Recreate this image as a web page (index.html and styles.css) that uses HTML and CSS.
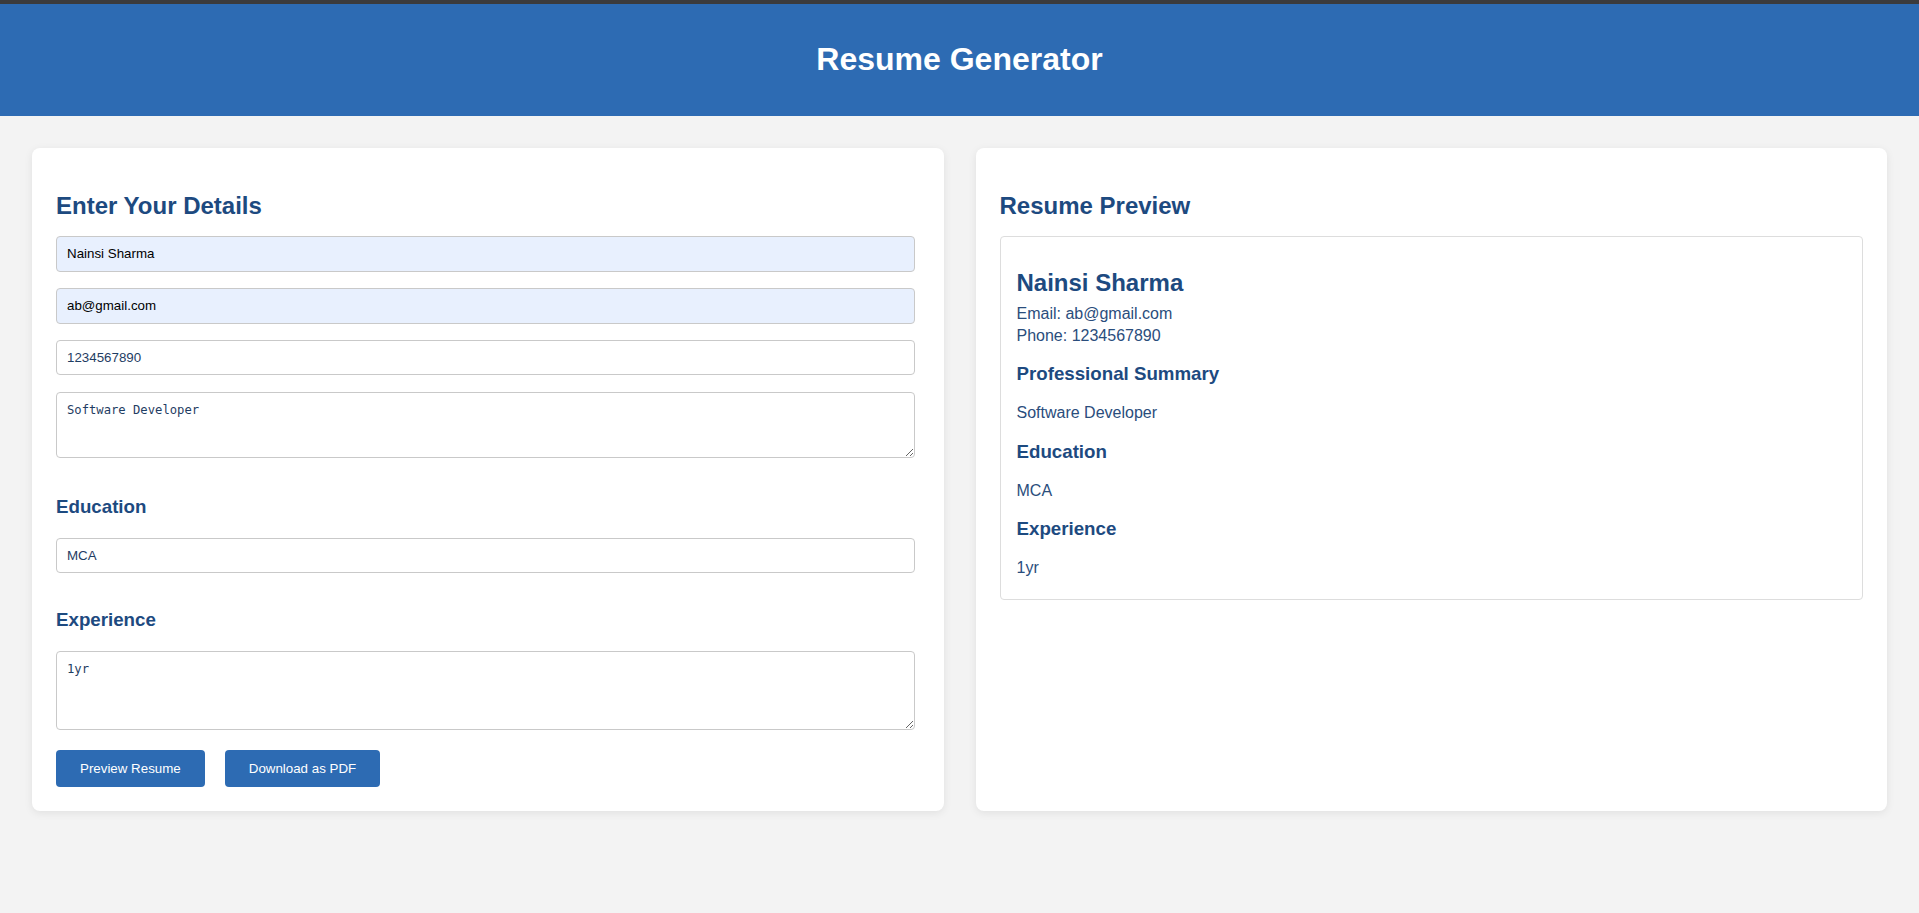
FILE: index.html
```html
<!DOCTYPE html>
<html lang="en">
<head>
<meta charset="UTF-8">
<title>Resume Generator</title>
<link rel="stylesheet" href="styles.css">
</head>
<body>
<header class="site-header">
  <h1 class="site-title">Resume Generator</h1>
</header>
<main class="layout">
  <section class="card form-card">
    <h2 class="card-title">Enter Your Details</h2>
    <input class="field autofilled" type="text" value="Nainsi Sharma">
    <input class="field autofilled" type="email" value="ab@gmail.com">
    <input class="field" type="text" value="1234567890">
    <textarea class="field area area-summary">Software Developer</textarea>
    <h3 class="section-title">Education</h3>
    <input class="field" type="text" value="MCA">
    <h3 class="section-title">Experience</h3>
    <textarea class="field area area-exp">1yr</textarea>
    <div class="actions">
      <button class="btn" type="button">Preview Resume</button>
      <button class="btn" type="button">Download as PDF</button>
    </div>
  </section>
  <section class="card preview-card">
    <h2 class="card-title">Resume Preview</h2>
    <div class="preview">
      <h2 class="preview-name">Nainsi Sharma</h2>
      <p class="preview-text">Email: ab@gmail.com</p>
      <p class="preview-text">Phone: 1234567890</p>
      <h3 class="preview-heading">Professional Summary</h3>
      <p class="preview-text">Software Developer</p>
      <h3 class="preview-heading">Education</h3>
      <p class="preview-text">MCA</p>
      <h3 class="preview-heading">Experience</h3>
      <p class="preview-text">1yr</p>
    </div>
  </section>
</main>
</body>
</html>
```
FILE: styles.css
```css
html, body {
  margin: 0;
  padding: 0;
}

body {
  background: #f3f3f3;
  font-family: "Liberation Sans", Arial, sans-serif;
  color: #2a4a72;
  min-height: 913px;
}

.site-header {
  background: #2d6bb3;
  border-top: 4px solid #3b3b3d;
  padding: 16px;
  text-align: center;
}

.site-title {
  margin: 21.44px 0;
  font-size: 32px;
  font-weight: bold;
  color: #ffffff;
  line-height: normal;
}

.layout {
  display: grid;
  grid-template-columns: 1fr 1fr;
  gap: 32px;
  padding: 32px;
  align-items: stretch;
}

.card {
  background: #ffffff;
  border-radius: 8px;
  box-shadow: 0 2px 8px rgba(0, 0, 0, 0.08);
  padding: 24px;
  display: flex;
  flex-direction: column;
}

.card-title {
  font-size: 24px;
  font-weight: bold;
  color: #1d4a80;
  margin: 20px 0 16.4px;
  line-height: normal;
}

.field {
  box-sizing: border-box;
  height: 35.33px;
  margin: 0 5px 16.6px 0;
  padding: 9px 10px;
  border: 1px solid #c9c9c9;
  border-radius: 4px;
  background: #ffffff;
  font-family: "Liberation Sans", Arial, sans-serif;
  font-size: 13.333px;
  color: #1f3d63;
  outline: none;
}

.autofilled {
  background: #e8f0fe;
  color: #000000;
}

.area {
  font-family: "DejaVu Sans Mono", "Liberation Mono", monospace;
  font-size: 12.2px;
  padding: 10px;
  resize: vertical;
  margin-bottom: 18.8px;
}

.area-summary {
  height: 66.4px;
}

.area-exp {
  height: 79.8px;
  margin-bottom: 20px;
}

.section-title {
  font-size: 18.72px;
  font-weight: bold;
  color: #1d4a80;
  margin: 18.72px 0 20px;
  line-height: normal;
}

.actions {
  display: flex;
  gap: 20px;
}

.btn {
  background: #2d6bb3;
  color: #ffffff;
  border: none;
  border-radius: 4px;
  padding: 10.7px 24px;
  font-family: "Liberation Sans", Arial, sans-serif;
  font-size: 13.333px;
  line-height: normal;
  cursor: pointer;
}

.preview {
  border: 1px solid #dddddd;
  border-radius: 4px;
  padding: 16px 16px 18px;
}

.preview-name {
  font-size: 24px;
  font-weight: bold;
  color: #1d4a80;
  margin: 16px 0 7.5px;
  line-height: normal;
}

.preview-heading {
  font-size: 18.72px;
  font-weight: bold;
  color: #1d4a80;
  margin: 18.72px 0;
  line-height: normal;
}

.preview-text {
  font-size: 16px;
  margin: 4px 0;
  color: #2a4d7c;
  line-height: normal;
}
```
